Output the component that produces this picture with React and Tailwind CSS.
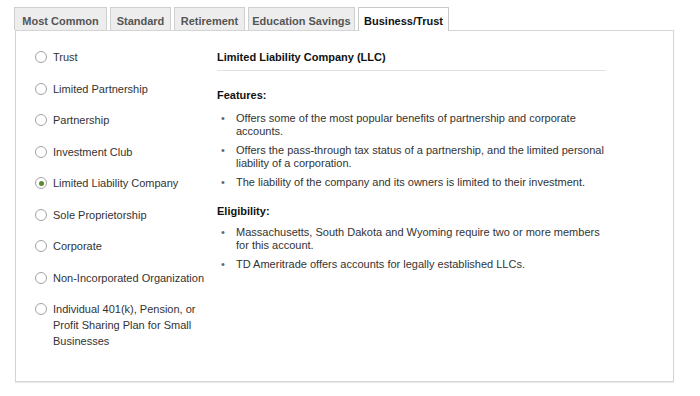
import React from "react";

const tabs = [
  { label: "Most Common", w: "w-[93px]" },
  { label: "Standard", w: "w-[61px]" },
  { label: "Retirement", w: "w-[71px]" },
  { label: "Education Savings", w: "w-[107px]" },
  { label: "Business/Trust", w: "w-[91px]" },
];

const types = [
  "Trust",
  "Limited Partnership",
  "Partnership",
  "Investment Club",
  "Limited Liability Company",
  "Sole Proprietorship",
  "Corporate",
  "Non-Incorporated Organization",
  "Individual 401(k), Pension, or Profit Sharing Plan for Small Businesses",
];

const features = [
  "Offers some of the most popular benefits of partnership and corporate accounts.",
  "Offers the pass-through tax status of a partnership, and the limited personal liability of a corporation.",
  "The liability of the company and its owners is limited to their investment.",
];

const eligibility = [
  "Massachusetts, South Dakota and Wyoming require two or more members for this account.",
  "TD Ameritrade offers accounts for legally established LLCs.",
];

function Radio({ checked }) {
  return (
    <span className="mt-[2px] flex h-[12px] w-[12px] shrink-0 items-center justify-center rounded-full border border-[#a3a3a3] bg-white">
      {checked && <span className="h-[5px] w-[5px] rounded-full bg-[#5a8a2c]" />}
    </span>
  );
}

function Bullets({ items }) {
  return (
    <ul className="flex flex-col gap-[6px]">
      {items.map((t) => (
        <li key={t} className="flex">
          <span className="w-[19px] shrink-0 pl-[4px] text-[#666]">•</span>
          <span className="w-[370px]">{t}</span>
        </li>
      ))}
    </ul>
  );
}

export default function App() {
  return (
    <div
      className="min-h-[396px] bg-white pl-[14px] pt-[7px] text-[11px] text-[#333]"
      style={{ fontFamily: '"Liberation Sans", Arial, sans-serif' }}
    >
      <div className="flex gap-[3px]">
        {tabs.map((t, i) => {
          const active = i === tabs.length - 1;
          return (
            <div
              key={t.label}
              className={
                active
                  ? `${t.w} relative z-10 -mb-px h-[24px] border border-b-0 border-[#c9c9c9] bg-white pt-[5px] text-center font-bold text-[#111]`
                  : `${t.w} h-[23px] border border-b-0 border-[#cfcfcf] bg-[#ededed] pt-[5px] text-center font-bold text-[#555]`
              }
            >
              {t.label}
            </div>
          );
        })}
      </div>
      <div className="ml-px flex h-[352px] w-[659px] border border-[#d4d4d4] pt-[18px] shadow-[0_1px_1px_rgba(0,0,0,0.08)]">
        <div className="flex w-[201px] flex-col gap-[15.5px] pl-[19px]">
          {types.map((t) => (
            <label key={t} className="flex items-start gap-[6px] leading-[16px]">
              <Radio checked={t === "Limited Liability Company"} />
              <span className="w-[160px]">{t}</span>
            </label>
          ))}
        </div>
        <div className="flex w-[389px] flex-col">
          <div className="border-b border-[#e2e2e2] pb-[5px] font-bold leading-[16px] text-[#111]">
            Limited Liability Company (LLC)
          </div>
          <div className="mt-[16px] font-bold leading-[16px] text-[#111]">Features:</div>
          <div className="mt-[9px] leading-[13px]">
            <Bullets items={features} />
          </div>
          <div className="mt-[14px] font-bold leading-[16px] text-[#111]">Eligibility:</div>
          <div className="mt-[7px] leading-[13px]">
            <Bullets items={eligibility} />
          </div>
        </div>
      </div>
    </div>
  );
}
